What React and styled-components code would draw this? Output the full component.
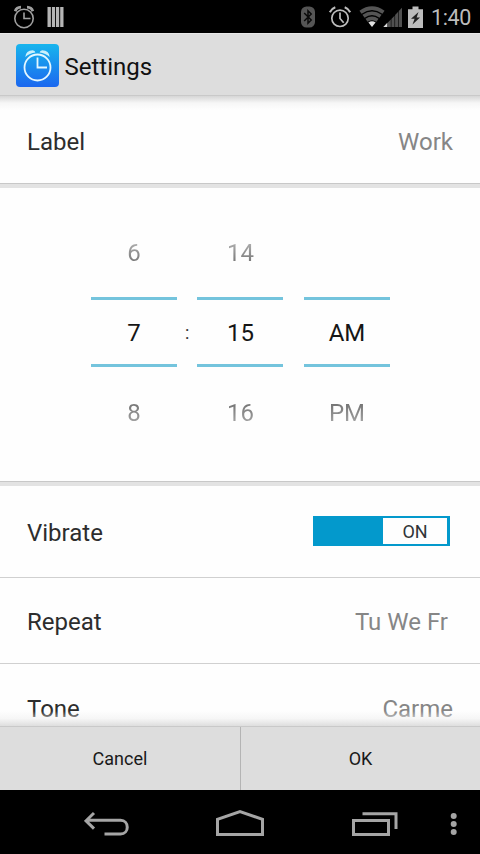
import React, { useState } from 'react'
import styled, { createGlobalStyle } from 'styled-components'

const GlobalStyle = createGlobalStyle`
    * { box-sizing: border-box; }
    body {
        margin: 0;
        background: #000;
        font-family: Roboto, "Liberation Sans", sans-serif;
    }
    button { font-family: inherit; }
    svg { display: block; flex: none; }
`

const Screen = styled.div`
    display: flex;
    flex-direction: column;
    width: 480px;
    height: 854px;
    overflow: hidden;
    background: #fefefe;
`

const StatusBar = styled.div`
    display: flex;
    flex: none;
    justify-content: space-between;
    height: 33px;
    padding: 0 8px 0 12px;
    background: #000;
`

const StatusGroup = styled.div`
    display: flex;
    align-items: center;
    gap: ${props => props.$gap || 0}px;
    margin-left: ${props => (props.$tight ? -2 : 0)}px;
`

const Clock = styled.span`
    width: 41px;
    margin-left: 8px;
    padding-top: 2px;
    color: #bcbcbc;
    font-size: 21.5px;
    letter-spacing: -0.4px;
    line-height: 31px;
    white-space: nowrap;
`

const Header = styled.header`
    display: flex;
    flex: none;
    align-items: center;
    height: 63px;
    padding: 1px 16px 0;
    background: #ddd;
    border-bottom: 1px solid #c9c9c9;
    border-top: 1px solid #e8e8e8;
`

const Title = styled.h1`
    margin: 3px 0 0 5.5px;
    color: #111;
    font-size: 24px;
    font-weight: 400;
`

const Content = styled.main`
    display: flex;
    flex: 1;
    flex-direction: column;
    min-height: 0;
    overflow: hidden;
    position: relative;
`

const Shade = styled.div`
    position: absolute;
    left: 0;
    right: 0;
    ${props => (props.$bottom ? 'bottom: 0; height: 15px;' : 'top: 0; height: 14px;')}
    background: linear-gradient(
        ${props => (props.$bottom ? 'to top' : 'to bottom')},
        ${props => (props.$bottom ? '#dedede' : '#d6d6d6')}, rgba(240, 240, 240, 0.55) 50%, rgba(255, 255, 255, 0)
    );
`

const Row = styled.div`
    display: flex;
    flex: none;
    align-items: center;
    justify-content: space-between;
    height: ${props => props.$height}px;
    padding: ${props => props.$top || 0}px ${props => props.$right || 27}px 0 27px;
    border-bottom: ${props => (props.$line ? '1px solid #d0d0d0' : 'none')};
`

const Name = styled.span`
    color: #2d2d2d;
    font-size: 24px;
    line-height: 28px;
`

const Value = styled(Name)`
    color: #868686;
`

const Divider = styled.div`
    flex: none;
    height: 5px;
    background: #e3e3e3;
    border-top: 1px solid #c8c8c8;
`

const Picker = styled.section`
    display: flex;
    flex: none;
    justify-content: center;
    height: 293px;
    padding-top: 25px;
`

const Wheel = styled.div`
    display: flex;
    flex-direction: column;
    width: 86px;
    text-align: center;
    font-size: 24px;
`

const Near = styled.div`
    height: ${props => (props.$below ? 94 : 84)}px;
    padding-left: 1px;
    line-height: ${props => (props.$below ? 93 : 81)}px;
    color: transparent;
    background: linear-gradient(
        ${props => (props.$below ? 'to bottom, #727272 38%, #aaa 62%' : 'to bottom, #aaa 37%, #727272 61%')}
    );
    background-clip: text;
`

const Chosen = styled.div`
    height: 70px;
    padding-left: 1px;
    line-height: 66px;
    color: #161616;
    border-top: 3px solid #74c4dd;
    border-bottom: 3px solid #74c4dd;
`

const Gap = styled.div`
    width: 20.5px;
    padding: 108px 0 0 1px;
    text-align: center;
    color: #333;
    font-size: 18px;
    line-height: 24px;
`

const Switch = styled.button`
    display: flex;
    justify-content: ${props => (props.$on ? 'flex-end' : 'flex-start')};
    width: 137px;
    height: 30px;
    margin-bottom: 3px;
    padding: 2px 3px 2px 2px;
    border: 0;
    background: ${props => (props.$on ? '#0399cc' : '#aaa')};
`

const Thumb = styled.span`
    width: 64px;
    height: 26px;
    background: #fefefe;
    color: #303438;
    font-size: 18px;
    line-height: 27px;
    text-align: center;
`

const Footer = styled.footer`
    display: flex;
    flex: none;
    height: 64px;
    border-top: 1px solid #c9c9c9;
    background: #ddd;
`

const FooterButton = styled.button`
    width: 240px;
    padding: 0 0 1px;
    border: 0;
    background: none;
    color: #191919;
    font-size: 18px;

    & + & { border-left: 1px solid #b4b4b4; }
`

const NavBar = styled.nav`
    display: flex;
    flex: none;
    align-items: flex-start;
    height: 64px;
    padding: 18px 22px 0 84px;
    background: #000;
`

const NavIcon = styled.svg`
    margin-left: ${props => props.$before || 0}px;
    fill: none;
    stroke: #a5a5a5;
    stroke-width: 3;
`

const AlarmSmall = () => (
    <svg width="24" height="24" viewBox="0 0 24 24" fill="none" stroke="#a0a0a0" strokeWidth="1.6">
        <circle cx="12" cy="13.5" r="9.2" />
        <path d="M12 7.5v6h6.5" />
        <path d="M3.2 6.2Q4.5 2.4 9 2.2M15 2.2Q19.5 2.4 20.8 6.2" strokeWidth="2.8" />
    </svg>
)

const AlarmRound = () => (
    <svg width="24" height="24" viewBox="0 0 24 24" fill="none" stroke="#bdbdbd" strokeWidth="1.7">
        <circle cx="12" cy="13.3" r="8.2" />
        <path d="M12 7.5v6l3.7 4.2" />
        <path d="M1.8 7.2Q3.5 3.7 7.3 2.3M16.7 2.3Q20.5 3.7 22.2 7.2" strokeWidth="2.1" />
    </svg>
)

const Bars = () => (
    <svg width="17" height="22" viewBox="0 0 17 22" fill="#b5b5b5">
        <path d="M.5 1h3.4v20H.5zM4.9 1h3.2v20H4.9zM9 1h3.2v20H9zM13.2 1h3.3v20h-3.3z" />
    </svg>
)

const Bluetooth = () => (
    <svg width="16" height="24" viewBox="0 0 16 24">
        <rect x="1" y="1.5" width="14" height="21" rx="5.5" fill="#555" />
        <path d="M4.2 8l7 7L8 18.2V5.8L11.2 9l-7 7" fill="none" stroke="#0a0a0a" strokeWidth="1.5" />
    </svg>
)

const Wifi = () => (
    <svg width="26" height="22" viewBox="0 0 26 22" fill="none" stroke="#555" strokeWidth="3.6">
        <path d="M1.5 6.2Q13-2 24.5 6.2" />
        <path d="M4.5 10.3Q13 4.2 21.5 10.3" />
        <path d="M7.5 14.2Q13 10.5 18.5 14.2" />
        <path d="M13 21l-3.6-4.6Q13 14 16.6 16.4z" fill="#e0e0e0" stroke="none" />
    </svg>
)

const Signal = () => (
    <svg width="20" height="22" viewBox="0 0 20 22" fill="#505050">
        <path d="M4.6 16.8L7.8 13.6V21H4.6zM8.4 12.9l3.1-3.2V21H8.4zM12.1 9l3.1-3.2V21h-3.1zM15.8 5.1L19 1.8V21h-3.2z" />
        <path d="M.3 21l4-4.2V21z" fill="#ddd" />
    </svg>
)

const Battery = () => (
    <svg width="15" height="24" viewBox="0 0 15 24">
        <path d="M4.5 1.5h6v2.8H15V23H0V4.3h4.5z" fill="#bdbdbd" />
        <path d="M10.5 7L3 13.7h3.6L4.5 19.5l7.5-7.1H8.6z" fill="#222" />
    </svg>
)

const AppIcon = () => (
    <svg width="43" height="43" viewBox="0 0 43 43">
        <defs>
            <linearGradient id="sky" x1="0" y1="0" x2="0" y2="1">
                <stop offset="0" stopColor="#18b5ed" />
                <stop offset="1" stopColor="#1b67ef" />
            </linearGradient>
        </defs>
        <rect width="43" height="43" rx="4" fill="url(#sky)" />
        <g fill="none" stroke="#e4f7ff" strokeWidth="1.8">
            <circle cx="21.5" cy="23.5" r="13" />
            <path d="M21.5 13.5v10H31" />
        </g>
        <path d="M9.3 13Q10 6.2 16.8 6.3Q19 6.8 19.4 8.5Q13.5 9.2 9.3 13zM33.7 13Q33 6.2 26.2 6.3Q24 6.8 23.6 8.5Q29.5 9.2 33.7 13z" fill="#c9f0fc" />
    </svg>
)

const hours = ['6', '7', '8']
const minutes = ['14', '15', '16']
const halves = ['', 'AM', 'PM']

const NumberWheel = ({ values }) => (
    <Wheel>
        <Near>{values[0]}</Near>
        <Chosen>{values[1]}</Chosen>
        <Near $below>{values[2]}</Near>
    </Wheel>
)

const App = () => {
    const [vibrate, setVibrate] = useState(true)
    return (
        <>
            <GlobalStyle />
            <Screen>
                <StatusBar>
                    <StatusGroup $gap={11}>
                        <AlarmSmall />
                        <Bars />
                    </StatusGroup>
                    <StatusGroup>
                        <StatusGroup $gap={12}>
                            <Bluetooth />
                            <AlarmRound />
                        </StatusGroup>
                        <StatusGroup $gap={7}>
                            <span />
                            <Wifi />
                        </StatusGroup>
                        <StatusGroup $gap={5} $tight>
                            <Signal />
                            <Battery />
                        </StatusGroup>
                        <Clock>1:40</Clock>
                    </StatusGroup>
                </StatusBar>

                <Header>
                    <AppIcon />
                    <Title>Settings</Title>
                </Header>

                <Content>
                    <Row $height={87} $top={4}>
                        <Name>Label</Name>
                        <Value>Work</Value>
                    </Row>
                    <Divider />
                    <Picker>
                        <NumberWheel values={hours} />
                        <Gap>:</Gap>
                        <NumberWheel values={minutes} />
                        <Gap />
                        <NumberWheel values={halves} />
                    </Picker>
                    <Divider />
                    <Row $height={92} $top={2} $right={30} $line>
                        <Name>Vibrate</Name>
                        <Switch $on={vibrate} onClick={() => setVibrate(!vibrate)}>
                            <Thumb>{vibrate ? 'ON' : 'OFF'}</Thumb>
                        </Switch>
                    </Row>
                    <Row $height={86} $top={3} $right={32} $line>
                        <Name>Repeat</Name>
                        <Value>Tu We Fr</Value>
                    </Row>
                    <Row $height={86} $top={3}>
                        <Name>Tone</Name>
                        <Value>Carme</Value>
                    </Row>
                    <Shade />
                    <Shade $bottom />
                </Content>

                <Footer>
                    <FooterButton>Cancel</FooterButton>
                    <FooterButton>OK</FooterButton>
                </Footer>

                <NavBar>
                    <NavIcon width="46" height="30" viewBox="84 808 46 30">
                        <path d="M94 813l-8 7.8 8 7.8M86.5 820.3H120.5C129.5 820.3 129.5 834 120.5 834H104.5" />
                    </NavIcon>
                    <NavIcon $before={84} width="52" height="30" viewBox="214 808 52 30">
                        <path d="M217.5 834.5V819.3L240 811.5L262.5 819.3V834.5z" />
                    </NavIcon>
                    <NavIcon $before={84} width="50" height="30" viewBox="350 808 50 30">
                        <path d="M353.5 820.5H388.5V834.5H353.5zM362.5 813.8H396V829" />
                    </NavIcon>
                    <NavIcon $before={48} width="12" height="30" viewBox="448 808 12 30">
                        <g fill="#a5a5a5" stroke="none">
                            <circle cx="453.7" cy="816" r="3" />
                            <circle cx="453.7" cy="824" r="3" />
                            <circle cx="453.7" cy="832" r="3" />
                        </g>
                    </NavIcon>
                </NavBar>
            </Screen>
        </>
    )
}

export default App
